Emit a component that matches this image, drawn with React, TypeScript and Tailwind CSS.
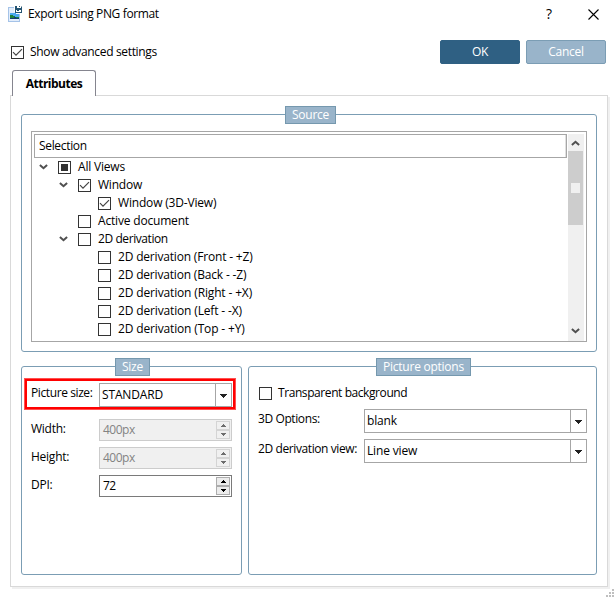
import React from 'react';
import clsx from 'clsx';

interface TreeItem {
  label: string;
  indent: string;
  state?: 'checked' | 'partial';
  open?: boolean;
  tracking: string;
}

const treeItems: TreeItem[] = [
  { label: 'All Views', indent: 'pl-[4px]', state: 'partial', open: true, tracking: 'tracking-[-0.2px]' },
  { label: 'Window', indent: 'pl-[24px]', state: 'checked', open: true, tracking: 'tracking-[-0.22px]' },
  { label: 'Window (3D-View)', indent: 'pl-[44px]', state: 'checked', tracking: 'tracking-[-0.18px]' },
  { label: 'Active document', indent: 'pl-[24px]', tracking: 'tracking-[-0.18px]' },
  { label: '2D derivation', indent: 'pl-[24px]', open: true, tracking: 'tracking-[-0.42px]' },
  { label: '2D derivation (Front - +Z)', indent: 'pl-[44px]', tracking: 'tracking-[-0.18px]' },
  { label: '2D derivation (Back - -Z)', indent: 'pl-[44px]', tracking: 'tracking-[-0.18px]' },
  { label: '2D derivation (Right - +X)', indent: 'pl-[44px]', tracking: 'tracking-[-0.15px]' },
  { label: '2D derivation (Left - -X)', indent: 'pl-[44px]', tracking: 'tracking-[-0.15px]' },
  { label: '2D derivation (Top - +Y)', indent: 'pl-[44px]', tracking: 'tracking-[-0.15px]' },
];

function CheckBox({ state }: { state?: 'checked' | 'partial' }) {
  return (
    <span className="flex h-[13px] w-[13px] shrink-0 items-center justify-center border border-[#333] bg-white">
      {state === 'partial' && <span className="h-[7px] w-[7px] bg-[#333]" />}
      {state === 'checked' && (
        <svg width="11" height="11" viewBox="0 0 11 11" fill="none" stroke="#444" strokeWidth="1.2">
          <path d="M1 5.2 4 8.2 10 2.2" />
        </svg>
      )}
    </span>
  );
}

function Chevron({ up = false }: { up?: boolean }) {
  return (
    <svg
      width="9"
      height="6"
      viewBox="0 0 9 6"
      fill="none"
      stroke="#505050"
      strokeWidth="2"
      className={clsx('shrink-0', up && 'rotate-180')}
    >
      <path d="M.9 .9 4.5 4.2 8.1 .9" />
    </svg>
  );
}

function GroupBox({ title, className, legend, children }: {
  title: string;
  className: string;
  legend: string;
  children: React.ReactNode;
}) {
  return (
    <section className={clsx('relative rounded-[3px] border border-[#7b9db4]', className)}>
      <h2
        className={clsx(
          'absolute -top-[9px] flex h-[18px] items-center justify-center border border-[#7598ae] bg-[#99b4ca] text-white',
          legend
        )}
      >
        {title}
      </h2>
      {children}
    </section>
  );
}

function Combo({ value, className }: { value: string; className: string }) {
  return (
    <div className={clsx('flex h-6 border border-[#a6a6a6] bg-white', className)}>
      <span className="flex flex-1 items-center pl-[2px] tracking-[-0.15px]">{value}</span>
      <span className="flex w-4 items-center justify-center border-l border-[#a6a6a6]">
        <svg width="7" height="4" viewBox="0 0 7 4" className="mt-[2px]">
          <path d="M0 0h7v1H6v1H5v1H4v1H3V3H2V2H1V1H0z" fill="#222" />
        </svg>
      </span>
    </div>
  );
}

function SpinButton({ up = false, disabled = false }: { up?: boolean; disabled?: boolean }) {
  return (
    <span
      className={clsx(
        'flex h-[9px] w-[14px] items-center justify-center border',
        disabled ? 'border-[#d4d4d4] bg-[#f0f0f0]' : 'border-[#adadad] bg-[#ececec]'
      )}
    >
      <svg width="5" height="3" viewBox="0 0 5 3" className={clsx(up && 'rotate-180')}>
        <path d="M0 0h5v1H4v1H3v1H2V2H1V1H0z" fill={disabled ? '#6d6d6d' : '#000'} />
      </svg>
    </span>
  );
}

function SpinField({ label, value, disabled = false }: { label: string; value: string; disabled?: boolean }) {
  return (
    <div className="flex h-[22px]">
      <span className="w-[68px] pt-px">{label}</span>
      <span
        className={clsx(
          'flex w-[133px] items-center border pr-[1px]',
          disabled ? 'border-[#ccc] bg-[#f0f0f0] text-[#838383]' : 'border-[#7a7a7a] bg-white'
        )}
      >
        <span className="flex-1 pl-[3px] tracking-[-0.5px]">{value}</span>
        <span className="flex flex-col">
          <SpinButton up disabled={disabled} />
          <SpinButton disabled={disabled} />
        </span>
      </span>
    </div>
  );
}

function AppIcon() {
  return (
    <svg width="16" height="18" viewBox="0 0 16 18" className="shrink-0">
      <rect x=".5" y="2.5" width="11" height="14" fill="#e2edfb" stroke="#a5c3e8" />
      <rect x="2" y="8" width="9" height="6" fill="#4ba8ef" />
      <path d="M2 10h3v1h2v1h4v2H2z" fill="#1f8038" />
      <path d="M2 13h4v-1h2v1h3v1H2z" fill="#123e75" />
      <path d="M6 0h9v9H8V7H6z" fill="#fff" />
      <path d="M7 1h6l1 1v6H7z" fill="#245472" />
      <path d="M9 1h4v2H9zM8 5h5v2H8z" fill="#fff" />
      <path d="M11 1h1v1h-1zM9 5h2v1H9z" fill="#245472" />
    </svg>
  );
}

export default function App() {
  return (
    <div className="relative h-[598px] w-[616px] overflow-hidden bg-white font-['Open_Sans',sans-serif] text-[12px] leading-[18px] tracking-[-0.25px] whitespace-nowrap text-black">
      <header className="flex h-7 items-center pl-2">
        <AppIcon />
        <h1 className="ml-1 flex-1 tracking-[-0.37px]">Export using PNG format</h1>
        <span className="w-[13px] text-[14px]">?</span>
        <svg width="11" height="11" viewBox="0 0 11 11" className="mr-[17px] ml-[29px]">
          <path d="M.5 .5l10 10M10.500 .5l-10 10" stroke="#000" strokeWidth="1.1" />
        </svg>
      </header>

      <div className="flex h-[42px] pt-3 pr-[10px] pl-[11px]">
        <label className="mt-[3px] flex h-[18px] flex-1 items-center gap-[6px] tracking-[-0.33px]">
          <CheckBox state="checked" />
          Show advanced settings
        </label>
        <button className="h-6 w-20 rounded-[2px] border border-[#2f6083] bg-[#2f6083] text-white">OK</button>
        <button className="ml-[6px] h-6 w-20 rounded-[2px] border border-[#7b9db4] bg-[#99b4ca] text-white">
          Cancel
        </button>
      </div>

      <div className="relative z-10 ml-3 flex h-[26px] w-[84px] items-center justify-center rounded-t-[3px] border border-b-0 border-[#85858f] bg-white pt-[1px] font-bold tracking-[-0.5px]">
        Attributes
      </div>

      <main className="-mt-px ml-[10px] h-[492px] w-[598px] border border-[#d9d9d9] pt-[18px] pl-[10px] shadow-[2px_2px_0_#f0f0f0]">
        <GroupBox title="Source" className="h-[238px] w-[576px] pt-[16px] pl-[9px]" legend="left-[263px] w-[51px]">
          <div className="flex h-[211px] w-[556px] border border-[#a6a6a6] pt-[2px] pl-[2px]">
            <div className="w-[534px]">
              <div className="flex h-6 w-[533px] items-center border border-[#a6a6a6] pl-1 tracking-[-0.33px] shadow-[inset_-1px_0_0_#e0e0e0]">
                Selection
              </div>
              {treeItems.map((item) => (
                <div key={item.label} className={clsx('flex h-[18px] items-center', item.indent, item.tracking)}>
                  <span className="w-5 pl-px">{item.open && <Chevron />}</span>
                  <CheckBox state={item.state} />
                  <span className="ml-[7px]">{item.label}</span>
                </div>
              ))}
            </div>
            <div className="flex w-4 flex-col items-center bg-[#f0f0f0]">
              <span className="mr-px flex h-[17px] items-center"><Chevron up /></span>
              <span className="mr-px flex h-[74px] w-[15px] items-center justify-center bg-[#cdcdcd]">
                <span className="h-[10px] w-[9px] bg-[#f0f0f0]" />
              </span>
              <span className="mt-auto mr-px mb-[7px]"><Chevron /></span>
            </div>
          </div>
        </GroupBox>

        <div className="mt-[14px] flex gap-[6px]">
          <GroupBox title="Size" className="h-[209px] w-[221px]" legend="left-[93px] w-[35px]">
            <div className="mt-[11px] ml-[2px] flex h-[32px] w-[212px] border-[3px] border-[#f00] pt-[2px] pl-[4px] outline-1 -outline-offset-1 outline-[#ff5050]">
              <span className="w-[68px] pt-px tracking-[-0.4px]">Picture size:</span>
              <Combo value="STANDARD" className="w-[133px]" />
            </div>
            <div className="mt-[9px] ml-[9px] flex flex-col gap-[6px]">
              <SpinField label="Width:" value="400px" disabled />
              <SpinField label="Height:" value="400px" disabled />
              <SpinField label="DPI:" value="72" />
            </div>
          </GroupBox>

          <GroupBox title="Picture options" className="h-[209px] w-[349px] pt-[17px] pl-[9px]" legend="left-[127px] w-[95px]">
            <label className="ml-px flex h-[18px] items-center gap-[6px] tracking-[-0.42px]">
              <CheckBox />
              Transparent background
            </label>
            <div className="mt-[7px] flex h-6 tracking-[-0.4px]">
              <span className="w-[106px] pt-px">3D Options:</span>
              <Combo value="blank" className="w-[223px]" />
            </div>
            <div className="mt-[6px] flex h-6 tracking-[-0.4px]">
              <span className="w-[106px] pt-px">2D derivation view:</span>
              <Combo value="Line view" className="w-[223px]" />
            </div>
          </GroupBox>
        </div>
      </main>

      <svg width="8" height="8" viewBox="0 0 8 8" className="absolute right-[2px] bottom-[1px]" fill="#bfbfbf">
        <path d="M6 0h2v2H6zM3 3h2v2H3zM6 3h2v2H6zM0 6h2v2H0zM3 6h2v2H3zM6 6h2v2H6z" />
      </svg>
    </div>
  );
}
